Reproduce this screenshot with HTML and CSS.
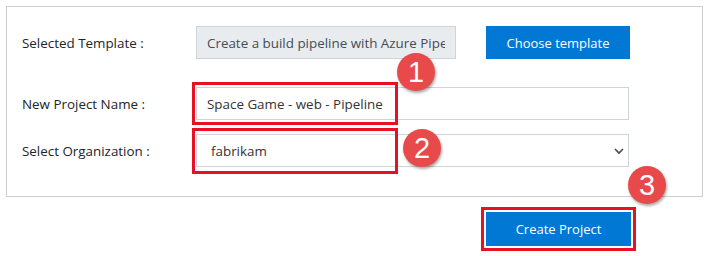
FILE: index.html
```html
<!DOCTYPE html>
<html lang="en">
<head>
  <meta charset="UTF-8">
  <title>Create Project</title>
  <link rel="stylesheet" href="styles.css">
</head>
<body>

<div class="page">
  <form class="panel">
    <div class="row row-template">
      <label class="label">Selected Template :</label>
      <div class="control-group">
        <input class="field field-disabled" type="text" value="Create a build pipeline with Azure Pipelines" disabled>
        <button type="button" class="btn btn-choose">Choose template</button>
      </div>
    </div>

    <div class="row row-name">
      <label class="label" for="projectName">New Project Name :</label>
      <div class="control">
        <input class="field" id="projectName" type="text" value="Space Game - web - Pipeline">
        <div class="highlight highlight-name"></div>
        <span class="badge badge-one">1</span>
      </div>
    </div>

    <div class="row row-org">
      <label class="label" for="orgSelect">Select Organization :</label>
      <div class="control">
        <select class="field field-select" id="orgSelect">
          <option>fabrikam</option>
        </select>
        <svg class="chevron" width="10" height="6" viewBox="0 0 10 6">
          <path d="M1 1 L5 5 L9 1" fill="none" stroke="#4a4a4a" stroke-width="1.7"/>
        </svg>
        <div class="highlight highlight-org"></div>
        <span class="badge badge-two">2</span>
      </div>
    </div>
  </form>

  <div class="actions">
    <div class="create-wrap">
      <button type="button" class="btn btn-create">Create Project</button>
      <span class="badge badge-three">3</span>
    </div>
  </div>
</div>

</body>
</html>
```

FILE: styles.css
```css
body {
  margin: 0;
  background: #ffffff;
  font-family: "Open Sans", "Noto Sans", Arial, sans-serif;
  font-size: 13.4px;
  color: #212529;
}
.page {
  padding: 6px 8px 0 6px;
}
.panel {
  box-sizing: border-box;
  width: 697px;
  height: 191px;
  border: 1px solid #cfcfcf;
  padding: 19px 0 0 15px;
}
.row {
  display: grid;
  grid-template-columns: 174px 1fr;
  align-items: center;
}
.row-name {
  margin-top: 28px;
}
.row-org {
  margin-top: 14px;
}
.label {
  color: #212529;
}
.control-group {
  display: flex;
  gap: 30px;
}
.control {
  position: relative;
  width: 433px;
}
.field {
  display: block;
  box-sizing: border-box;
  width: 433px;
  height: 33px;
  padding: 0 10px;
  border: 1px solid #cfd4da;
  background: #ffffff;
  font-family: inherit;
  font-size: 13.4px;
  color: #333333;
  outline: none;
}
.field-disabled {
  width: 260px;
  background: #e9ecef;
  color: #454d55;
}
.field-select {
  -webkit-appearance: none;
  appearance: none;
  padding: 0 14px;
}
.chevron {
  position: absolute;
  right: 5px;
  top: 14px;
}
.btn {
  background-color: #0078d4;
  color: #ffffff;
  border: none;
  font-family: inherit;
  font-size: 13px;
  cursor: pointer;
}
.btn-choose {
  width: 144px;
  height: 33px;
}
.highlight {
  position: absolute;
  left: -4px;
  width: 206px;
  border: 3px solid #e81123;
  box-sizing: border-box;
}
.highlight-name {
  top: -5px;
  height: 43px;
}
.highlight-org {
  top: -6px;
  height: 46px;
}
.badge {
  position: absolute;
  width: 38px;
  height: 38px;
  border-radius: 50%;
  background: #e84a4b;
  color: #ffffff;
  font-family: "Liberation Sans", Arial, sans-serif;
  font-size: 29px;
  line-height: 38px;
  text-align: center;
  box-shadow: 1px 2px 3px rgba(0, 0, 0, 0.35);
}
.badge-one {
  left: 201px;
  top: -34px;
}
.badge-two {
  left: 207px;
  top: -5px;
}
.actions {
  display: flex;
  justify-content: flex-end;
  width: 697px;
  margin-top: 10px;
}
.create-wrap {
  position: relative;
  margin-right: 67px;
  padding: 2px;
  border: 3px solid #e81123;
}
.btn-create {
  display: block;
  width: 145px;
  height: 34px;
}
.badge-three {
  left: 144px;
  top: -44px;
}
```
